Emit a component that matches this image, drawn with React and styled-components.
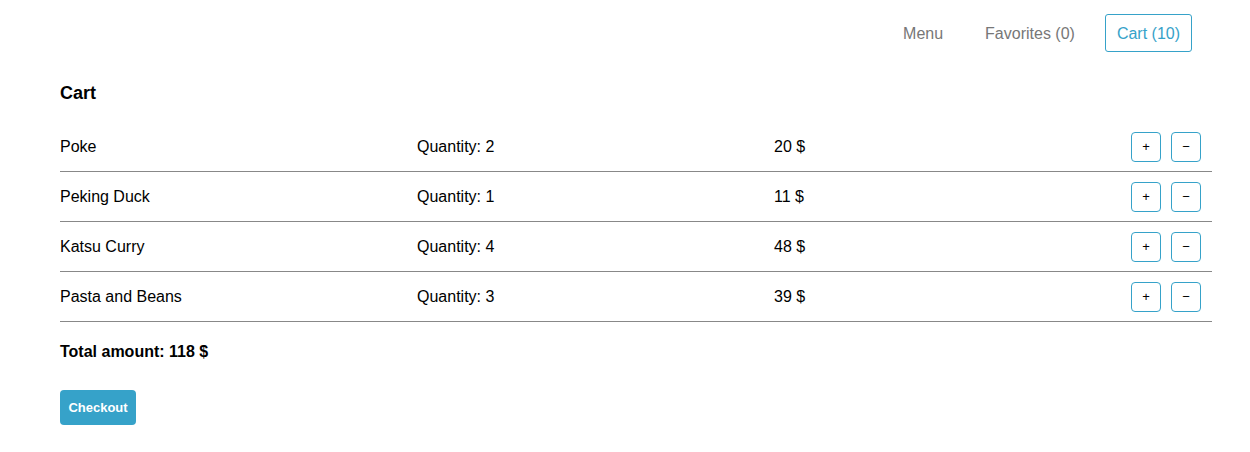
import styled, { createGlobalStyle } from "styled-components";

const GlobalStyle = createGlobalStyle`
  body {
    margin: 0;
    font-family: "Liberation Sans", Arial, sans-serif;
    background: #fff;
    color: #000;
  }
`;

const items = [
  { name: "Poke", qty: 2, price: 20 },
  { name: "Peking Duck", qty: 1, price: 11 },
  { name: "Katsu Curry", qty: 4, price: 48 },
  { name: "Pasta and Beans", qty: 3, price: 39 },
];

const App = () => {
  const total = items.reduce((sum, i) => sum + i.price, 0);
  const count = items.reduce((sum, i) => sum + i.qty, 0);

  return (
    <Page>
      <GlobalStyle />
      <Nav>
        <NavLink>Menu</NavLink>
        <NavLink>Favorites (0)</NavLink>
        <NavLink active>Cart ({count})</NavLink>
      </Nav>
      <Content>
        <Title>Cart</Title>
        <List>
          {items.map((item) => (
            <Row key={item.name}>
              <Cell>{item.name}</Cell>
              <Cell>Quantity: {item.qty}</Cell>
              <Cell>{item.price} $</Cell>
              <Actions>
                <SmallButton>+</SmallButton>
                <SmallButton>−</SmallButton>
              </Actions>
            </Row>
          ))}
        </List>
        <Total>Total amount: {total} $</Total>
        <Checkout>Checkout</Checkout>
      </Content>
    </Page>
  );
};

const Page = styled.div`
  width: 1250px;
  min-height: 452px;
`;

const Nav = styled.nav`
  display: flex;
  justify-content: flex-end;
  align-items: center;
  column-gap: 18px;
  padding: 14px 58px 0 0;
`;

const NavLink = styled.a`
  box-sizing: border-box;
  height: 38px;
  display: flex;
  align-items: center;
  padding: 2px 11px 0;
  font-size: 16px;
  border-radius: 3px;
  color: ${(p) => (p.active ? "#36a2c9" : "#777")};
  border: 1px solid ${(p) => (p.active ? "#36a2c9" : "transparent")};
  cursor: pointer;
`;

const Content = styled.main`
  padding: 0 38px 0 60px;
`;

const Title = styled.h2`
  margin: 30px 0 0;
  font-size: 18px;
  font-weight: bold;
  line-height: 22px;
`;

const List = styled.div`
  margin-top: 18px;
`;

const Row = styled.div`
  display: flex;
  align-items: center;
  height: 49px;
  padding-right: 11px;
  border-bottom: 1px solid #888;
  font-size: 16px;
`;

const Cell = styled.span`
  flex: 1;
`;

const Actions = styled.div`
  display: flex;
  column-gap: 10px;
`;

const SmallButton = styled.button`
  width: 30px;
  height: 30px;
  padding: 0;
  border: 1px solid #36a2c9;
  border-radius: 4px;
  background: #fff;
  color: #000;
  font-family: "Liberation Sans", Arial, sans-serif;
  font-size: 13px;
  cursor: pointer;
`;

const Total = styled.p`
  margin: 21px 0 0;
  font-size: 16px;
  font-weight: bold;
  line-height: 18px;
`;

const Checkout = styled.button`
  margin-top: 29px;
  width: 76px;
  height: 35px;
  border: none;
  border-radius: 4px;
  background: #36a2c9;
  color: #fff;
  font-family: "Liberation Sans", Arial, sans-serif;
  font-size: 13px;
  font-weight: bold;
  cursor: pointer;
`;

export default App;
